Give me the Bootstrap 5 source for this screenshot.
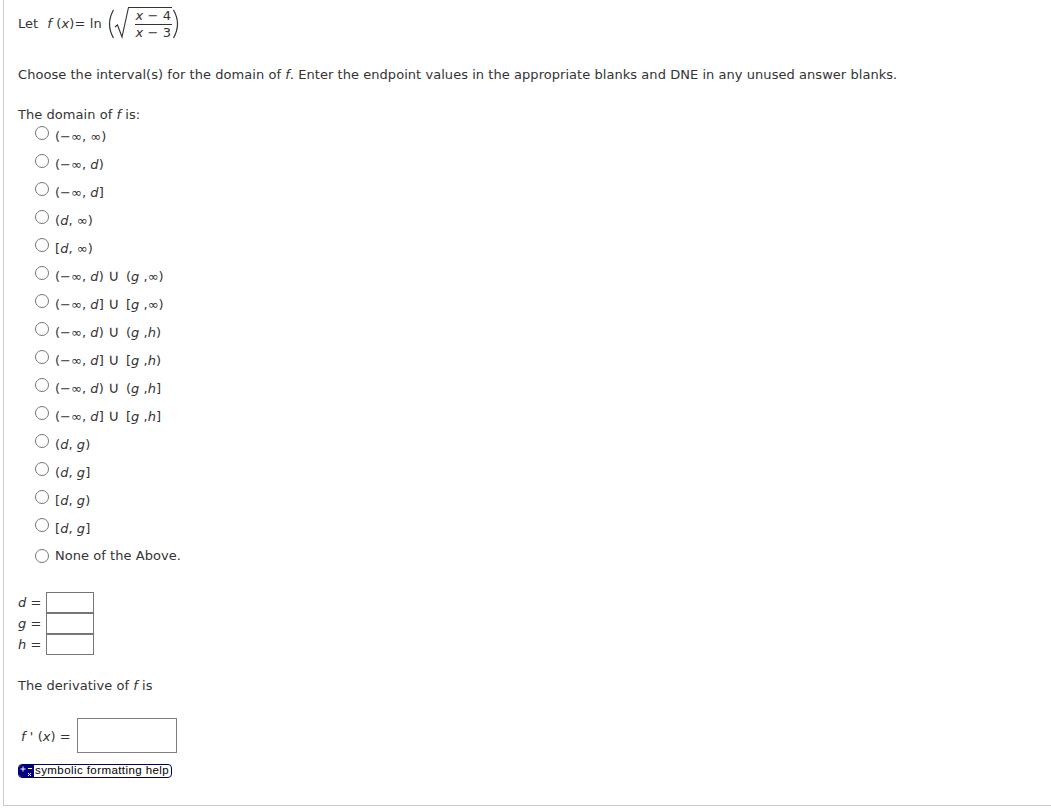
<!DOCTYPE html>
<html lang="en">
<head>
<meta charset="utf-8">
<title>Domain of f</title>
<link href="https://cdn.jsdelivr.net/npm/bootstrap@5.3.0/dist/css/bootstrap.min.css" rel="stylesheet">
<style>
html,body{height:100%;background:#fff;}
body{font-family:"DejaVu Sans",Verdana,sans-serif;font-size:13px;letter-spacing:.05px;color:#333;line-height:18px;overflow:hidden;}
.qframe{height:806px;width:1048px;border-left:1px solid #ccc;border-bottom:1px solid #ccc;margin-left:3px;padding:0 0 0 14px;}
.qline{height:47px;}
.qlet{margin-right:9px;}
.qfn{margin-right:4px;letter-spacing:.12px;}
.qcup{font-size:16px;line-height:14px;padding:0 2px 0 0;}
.qparen{flex:none;}
.qroot{padding-top:7px;height:47px;}
.qrootmark{flex:none;margin-left:-1px;}
.qfrac{display:flex;flex-direction:column;align-items:center;width:37px;border-top:1px solid #333;line-height:16px;}
.qfrac-top{border-bottom:1px solid #333;width:100%;text-align:center;white-space:nowrap;}
.qfrac-bot{white-space:nowrap;}
.qinstr{margin-top:19px;height:18px;}
.qhead{margin-top:22px;height:18px;}
.qopts{padding-left:17px;margin-top:-1px;}
.qopt{height:28px;gap:6px;}
.qopt:last-child{height:26px;}
.qcirc{width:14px;height:14px;border:1px solid #767676;border-radius:50%;background:#fff;margin-top:-8px;flex:none;}
.qopt:last-child .qcirc{margin-top:-1px;}
.qvars{margin-top:23px;}
.qvar{height:21px;}
.qvar-l{width:28px;white-space:nowrap;}
.qbox{width:48px;height:21px;border:1px solid #767676;background:#fff;}
.qderiv{margin-top:22px;height:18px;}
.qfp{margin-top:23px;height:35px;}
.qfp-l{width:59px;padding-left:3px;margin-top:2px;white-space:nowrap;}
.qfpbox{width:100px;height:35px;border:1px solid #808080;background:#fff;}
.qhelp{margin-top:11px;width:154px;height:14px;border:1px solid #000066;border-radius:4px;overflow:hidden;font-family:"Liberation Sans",Arial,sans-serif;font-size:11.5px;line-height:11px;color:#000;letter-spacing:.42px;}
.qhelp-ic{width:15px;background:#000080;flex:none;}
.qhelp-t{padding-left:1px;white-space:nowrap;}
</style>
</head>
<body>
<div class="qframe">
  <div class="qline d-flex align-items-center">
    <span class="qlet">Let</span><span class="qfn"><i>f</i> (<i>x</i>)= ln</span>
    <svg class="qparen" width="9" height="30" viewBox="0 0 9 30"><path d="M7.5 1 Q-.5 15 7.5 29" fill="none" stroke="#333" stroke-width="1.2"/></svg>
    <div class="qroot d-flex align-items-start">
      <svg class="qrootmark" width="21" height="32" viewBox="0 0 21 32"><path d="M1 20 L3.5 18 L8 30 L14.5 .5 H21" fill="none" stroke="#333" stroke-width="1.1"/></svg>
      <div class="qfrac"><span class="qfrac-top"><i>x</i> − 4</span><span class="qfrac-bot"><i>x</i> − 3</span></div>
    </div>
    <svg class="qparen" width="9" height="30" viewBox="0 0 9 30"><path d="M1.5 1 Q9.5 15 1.5 29" fill="none" stroke="#333" stroke-width="1.2"/></svg>
  </div>

  <div class="qinstr text-nowrap">Choose the interval(s) for the domain of <i>f</i>. Enter the endpoint values in the appropriate blanks and DNE in any unused answer blanks.</div>

  <div class="qhead">The domain of <i>f</i> is:</div>

  <div class="qopts">
    <div class="qopt d-flex align-items-center"><span class="qcirc"></span><span>(−∞, ∞)</span></div>
    <div class="qopt d-flex align-items-center"><span class="qcirc"></span><span>(−∞, <i>d</i>)</span></div>
    <div class="qopt d-flex align-items-center"><span class="qcirc"></span><span>(−∞, <i>d</i>]</span></div>
    <div class="qopt d-flex align-items-center"><span class="qcirc"></span><span>(<i>d</i>, ∞)</span></div>
    <div class="qopt d-flex align-items-center"><span class="qcirc"></span><span>[<i>d</i>, ∞)</span></div>
    <div class="qopt d-flex align-items-center"><span class="qcirc"></span><span>(−∞, <i>d</i>) <span class="qcup">∪</span> (<i>g</i> ,∞)</span></div>
    <div class="qopt d-flex align-items-center"><span class="qcirc"></span><span>(−∞, <i>d</i>] <span class="qcup">∪</span> [<i>g</i> ,∞)</span></div>
    <div class="qopt d-flex align-items-center"><span class="qcirc"></span><span>(−∞, <i>d</i>) <span class="qcup">∪</span> (<i>g</i> ,<i>h</i>)</span></div>
    <div class="qopt d-flex align-items-center"><span class="qcirc"></span><span>(−∞, <i>d</i>] <span class="qcup">∪</span> [<i>g</i> ,<i>h</i>)</span></div>
    <div class="qopt d-flex align-items-center"><span class="qcirc"></span><span>(−∞, <i>d</i>) <span class="qcup">∪</span> (<i>g</i> ,<i>h</i>]</span></div>
    <div class="qopt d-flex align-items-center"><span class="qcirc"></span><span>(−∞, <i>d</i>] <span class="qcup">∪</span> [<i>g</i> ,<i>h</i>]</span></div>
    <div class="qopt d-flex align-items-center"><span class="qcirc"></span><span>(<i>d</i>, <i>g</i>)</span></div>
    <div class="qopt d-flex align-items-center"><span class="qcirc"></span><span>(<i>d</i>, <i>g</i>]</span></div>
    <div class="qopt d-flex align-items-center"><span class="qcirc"></span><span>[<i>d</i>, <i>g</i>)</span></div>
    <div class="qopt d-flex align-items-center"><span class="qcirc"></span><span>[<i>d</i>, <i>g</i>]</span></div>
    <div class="qopt d-flex align-items-center"><span class="qcirc"></span><span>None of the Above.</span></div>
  </div>

  <div class="qvars">
    <div class="qvar d-flex align-items-center"><span class="qvar-l"><i>d</i> =</span><span class="qbox"></span></div>
    <div class="qvar d-flex align-items-center"><span class="qvar-l"><i>g</i> =</span><span class="qbox"></span></div>
    <div class="qvar d-flex align-items-center"><span class="qvar-l"><i>h</i> =</span><span class="qbox"></span></div>
  </div>

  <div class="qderiv">The derivative of <i>f</i> is</div>

  <div class="qfp d-flex align-items-center"><span class="qfp-l"><i>f</i> ' (<i>x</i>) =</span><span class="qfpbox"></span></div>

  <div class="qhelp d-flex">
    <span class="qhelp-ic"><svg class="d-block" width="15" height="12" viewBox="0 0 15 12"><path d="M1.5 4H6.5M4 1.5V6.5M9 3.5H13M9 8L12 11M12 8L9 11" stroke="#fff" stroke-width="1" fill="none"/></svg></span>
    <span class="qhelp-t">symbolic formatting help</span>
  </div>
</div>
</body>
</html>
